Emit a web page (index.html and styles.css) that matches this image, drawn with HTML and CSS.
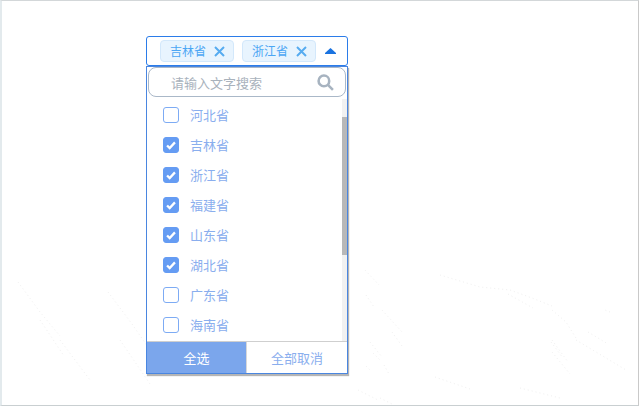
FILE: index.html
```html
<!doctype html>
<html lang="zh-CN">
  <head>
    <meta charset="UTF-8" />
    <title>下拉多选</title>
    <link rel="stylesheet" href="styles.css">
  </head>
  <body>
    <div class="frame">
      <!-- faint background texture -->
      <svg class="texture" viewBox="0 0 640 407">
        <path d="M365 270l14 15M366 295l8 12M382 310l20 22M392 332l10 14M370 342l12 15M373 353l8 8M384 365l5 9M366 366l4 4" />
        <path d="M440 275l40 12 30 3 22 8 20 8M508 294l25 14M552 310l14 12 10 16M552 340l16 22M610 312l-5 -2M551 342l12 16M576 340l50 30M588 332l20 12M552 352l18 22M435 377l35 12M520 388l40 10M358 390l20 10M380 398l12 6" />
        <path d="M18 282l22 30 20 24M40 320l24 36M60 340l30 40M108 292l24 32 18 26M120 340l30 44M210 270l40 18M230 300l30 40M280 330l-18 -12" />
      </svg>
      <div class="select">
        <div class="select-head">
          <span class="tag">吉林省<svg class="tag-x" viewBox="0 0 11 11"><path d="M1 1l9 9M10 1l-9 9"/></svg></span>
          <span class="tag">浙江省<svg class="tag-x" viewBox="0 0 11 11"><path d="M1 1l9 9M10 1l-9 9"/></svg></span>
          <svg class="caret" viewBox="0 0 11 6"><path d="M5.5 0L11 5v1H0V5z"/></svg>
        </div>
        <div class="panel">
          <div class="search">
            <span class="search-text">请输入文字搜索</span>
            <svg class="search-icon" viewBox="0 0 16 16"><circle cx="6.5" cy="6.5" r="5"/><path d="M10.5 10.5L15 15"/></svg>
          </div>
          <div class="list">
            <ul class="options">
              <li class="option"><span class="box"></span>河北省</li>
              <li class="option"><span class="box on"><svg viewBox="0 0 16 16"><path d="M3.5 8.5l3 3 6-6.500"/></svg></span>吉林省</li>
              <li class="option"><span class="box on"><svg viewBox="0 0 16 16"><path d="M3.5 8.5l3 3 6-6.500"/></svg></span>浙江省</li>
              <li class="option"><span class="box on"><svg viewBox="0 0 16 16"><path d="M3.5 8.5l3 3 6-6.500"/></svg></span>福建省</li>
              <li class="option"><span class="box on"><svg viewBox="0 0 16 16"><path d="M3.5 8.5l3 3 6-6.500"/></svg></span>山东省</li>
              <li class="option"><span class="box on"><svg viewBox="0 0 16 16"><path d="M3.5 8.5l3 3 6-6.500"/></svg></span>湖北省</li>
              <li class="option"><span class="box"></span>广东省</li>
              <li class="option"><span class="box"></span>海南省</li>
            </ul>
            <div class="scrollbar"><div class="thumb"></div></div>
          </div>
          <div class="actions">
            <div class="action primary">全选</div>
            <div class="action">全部取消</div>
          </div>
        </div>
      </div>
    </div>
  </body>
</html>
```
FILE: styles.css
```css
* {
  box-sizing: border-box;
}
html, body {
  height: 100%;
}
body {
  margin: 0;
  background: #fff;
  font-family: "Noto Sans CJK SC", "Liberation Sans", sans-serif;
  font-size: 13px;
  overflow: hidden;
}
.frame {
  position: relative;
  width: 639px;
  height: 406px;
  padding: 35px 0 0 144px;
  border: 1px solid #d3d7d9;
  border-left: 2px solid #e3eaed;
  border-right: 1px solid #c9c9c9;
  border-bottom-color: #c9cfd1;
}
.texture {
  position: absolute;
  left: -2px;
  top: -1px;
  width: 640px;
  height: 407px;
  fill: none;
  stroke: #f0f0f0;
  stroke-width: 1;
  stroke-dasharray: 1 3;
}
.select {
  position: relative;
  width: 202px;
}
.select-head {
  height: 30px;
  display: flex;
  align-items: center;
  gap: 8px;
  padding-left: 13px;
  border: 1px solid #2b7ce9;
  border-radius: 3px;
  background: #fff;
}
.tag {
  width: 74px;
  height: 22px;
  display: flex;
  align-items: center;
  padding-left: 9px;
  font-size: 12px;
  color: #4ba6f4;
  line-height: 20px;
  background: #e8f4fe;
  border: 1px solid #d3e8fb;
  border-radius: 4px;
}
.tag-x {
  width: 11px;
  height: 11px;
  margin-left: 8px;
  fill: none;
  stroke: #56abf0;
  stroke-width: 2;
}
.caret {
  width: 11px;
  height: 6px;
  margin-left: 1px;
  fill: #1a73e0;
}
.panel {
  height: 308px;
  border: 1px solid #4a86e0;
  box-shadow: 1px 2px 1px #b5b5b5;
  display: flex;
  flex-direction: column;
  background: #fff;
}
.search {
  height: 30px;
  margin: 0 0 0 1px;
  width: 198px;
  display: flex;
  align-items: center;
  justify-content: space-between;
  padding: 0 11px 0 22px;
  border: 1px solid #aab8c8;
  border-radius: 8px;
  color: #a9b2bc;
  flex: none;
}
.search-icon {
  width: 17px;
  height: 17px;
  fill: none;
  stroke: #a7b3c0;
  stroke-width: 2.4;
}
.list {
  flex: 1;
  display: flex;
  min-height: 0;
  overflow: hidden;
}
.options {
  flex: 1;
  list-style: none;
  margin: 0;
  padding: 3px 0 0 16px;
}
.option {
  height: 30px;
  display: flex;
  align-items: center;
  gap: 11px;
  line-height: 28px;
  color: #8aaeee;
}
.box {
  width: 16px;
  height: 16px;
  border: 1px solid #7dabf4;
  border-radius: 3px;
  background: #fff;
}
.box.on {
  border-color: #659cf3;
  background: #659cf3;
}
.box svg {
  display: block;
  width: 14px;
  height: 14px;
  fill: none;
  stroke: #fff;
  stroke-width: 2.6;
}
.scrollbar {
  width: 5px;
  background: #f1f1f1;
  padding-top: 18px;
  margin-top: 2px;
}
.thumb {
  height: 138px;
  background: #b8b8b8;
}
.actions {
  height: 32px;
  flex: none;
  display: flex;
  border-top: 1px solid #cfcfcf;
}
.action {
  flex: 1;
  display: flex;
  align-items: center;
  justify-content: center;
  color: #8aaeee;
  background: #fff;
}
.action.primary {
  flex: none;
  width: 100px;
  color: #fff;
  background: #7ba6ec;
  border-right: 1px solid #d8d8d8;
}
```
